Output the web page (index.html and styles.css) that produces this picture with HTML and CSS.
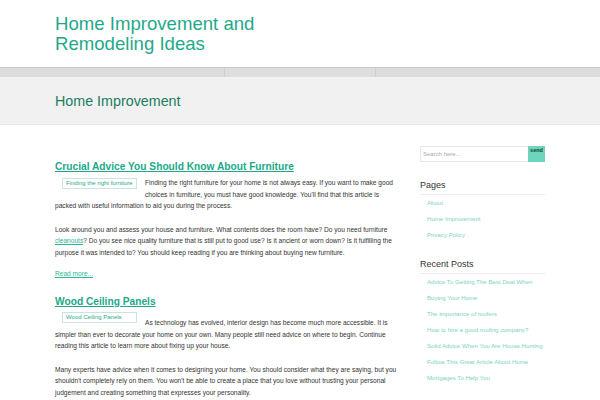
FILE: index.html
```html
<!DOCTYPE html>
<html lang="en">
<head>
  <title>Home Improvement and Remodeling Ideas</title>
  <link rel="stylesheet" href="styles.css">
</head>
<body>
  <header class="site-header">
    <div class="wrap">
      <h1 class="site-title">Home Improvement and<br>Remodeling Ideas</h1>
    </div>
  </header>

  <nav class="menu-bar">
    <div class="menu-box"></div>
  </nav>

  <div class="crumb-band">
    <div class="wrap">
      <h2 class="crumb-title">Home Improvement</h2>
    </div>
  </div>

  <div class="wrap main">
    <div class="content">
      <article class="post">
        <h3 class="post-title"><a href="#">Crucial Advice You Should Know About Furniture</a></h3>
        <p>
          <span class="thumb thumb-float"><span class="alt">Finding the right furniture</span></span>
          Finding the right furniture for your home is not always easy. If you want to make good choices in furniture, you must have good knowledge. You'll find that this article is packed with useful information to aid you during the process.
        </p>
        <p class="last">Look around you and assess your house and furniture. What contents does the room have? Do you need furniture <a href="#">cleanouts</a>? Do you see nice quality furniture that is still put to good use? Is it ancient or worn down? Is it fulfilling the purpose it was intended to? You should keep reading if you are thinking about buying new furniture.</p>
        <p class="more"><a href="#">Read more...</a></p>
      </article>

      <article class="post">
        <h3 class="post-title"><a href="#">Wood Ceiling Panels</a></h3>
        <p><span class="thumb thumb-inline"><span class="alt">Wood Ceiling Panels</span></span>As technology has evolved, interior design has become much more accessible. It is simpler than ever to decorate your home on your own. Many people still need advice on where to begin. Continue reading this article to learn more about fixing up your house.</p>
        <p>Many experts have advice when it comes to designing your home. You should consider what they are saying, but you shouldn't completely rely on them. You won't be able to create a place that you love without trusting your personal judgement and creating something that expresses your personality.</p>
      </article>
    </div>

    <aside class="sidebar">
      <form class="search">
        <input type="text" placeholder="Search here...">
        <button type="button">send</button>
      </form>

      <div class="widget">
        <h4>Pages</h4>
        <ul>
          <li><a href="#">About</a></li>
          <li><a href="#">Home Improvement</a></li>
          <li><a href="#">Privacy Policy</a></li>
        </ul>
      </div>

      <div class="widget">
        <h4>Recent Posts</h4>
        <ul>
          <li><a href="#">Advice To Getting The Best Deal When</a></li>
          <li><a href="#">Buying Your Home</a></li>
          <li><a href="#">The importance of roofers</a></li>
          <li><a href="#">How to hire a good roofing company?</a></li>
          <li><a href="#">Solid Advice When You Are House Hunting</a></li>
          <li><a href="#">Follow This Great Article About Home</a></li>
          <li><a href="#">Mortgages To Help You</a></li>
        </ul>
      </div>
    </aside>
  </div>
</body>
</html>
```

FILE: styles.css
```css
body {
  margin: 0;
  background: #fff;
  font-family: "Liberation Sans", Arial, sans-serif;
  color: #333;
}

.wrap {
  width: 490px;
  margin: 0 auto;
}

.site-header {
  height: 67px;
  background: #fff;
}

.site-title {
  margin: 0;
  padding-top: 14px;
  font-size: 18.6px;
  line-height: 20px;
  font-weight: normal;
  color: #1fa98a;
}

.menu-bar {
  height: 9px;
  background: #dcdcdc;
  border-top: 1px solid #c6c6c6;
  display: flex;
}

.menu-box {
  margin-left: 224px;
  width: 150px;
  border-left: 1px solid #cfcfcf;
  border-right: 1px solid #cfcfcf;
  background: #dedede;
}

.crumb-band {
  height: 47px;
  background: #f1f1f1;
  border-bottom: 1px solid #e6e6e6;
  display: flex;
  align-items: center;
}

.crumb-title {
  margin: 0;
  font-size: 14.3px;
  font-weight: normal;
  color: #1b7c62;
}

.main {
  display: flex;
  justify-content: space-between;
  padding-top: 21px;
}

.content {
  width: 343px;
  padding-top: 12px;
}

.post-title {
  margin: 0 0 1px;
  font-size: 10.2px;
  line-height: 18px;
}

.post-title a {
  color: #1ca889;
}

.post {
  margin-bottom: 13px;
}

.post p {
  margin: 0 0 11.5px;
  font-size: 6.6px;
  line-height: 11.7px;
}

.post p.last {
  margin-bottom: 9.5px;
}

.post p.more {
  margin-bottom: 0;
}

.post p a {
  color: #2ab596;
}

.thumb {
  display: inline-block;
  width: 75px;
  margin: 0 8px 0 7px;
}

.thumb-float {
  float: left;
  height: 20px;
  margin-top: 1px;
}

.thumb-inline {
  height: 13px;
  overflow: hidden;
  vertical-align: baseline;
}

.thumb .alt {
  display: block;
  height: 9px;
  border: 1px solid #cfe3dd;
  padding-left: 3px;
  font-size: 6px;
  line-height: 9px;
  color: #1fa98a;
  white-space: nowrap;
}

.sidebar {
  width: 125px;
}

.search {
  display: flex;
  height: 16px;
  margin: 0 0 16.5px;
}

.search input {
  flex: 1;
  min-width: 0;
  height: 16px;
  box-sizing: border-box;
  border: 1px solid #e6e6e6;
  border-right: none;
  padding: 0 0 0 2px;
  font-family: inherit;
  font-size: 6px;
  color: #999;
}

.search input::placeholder {
  color: #aaa;
}

.search button {
  width: 17px;
  height: 16px;
  border: none;
  padding: 1px 0 0;
  background: #6dd5bb;
  font-family: inherit;
  font-size: 5.5px;
  font-weight: bold;
  color: #1c3a33;
  display: flex;
  justify-content: center;
  align-items: flex-start;
}

.widget {
  margin-bottom: 15.5px;
}

.widget h4 {
  margin: 0;
  padding-bottom: 2px;
  border-bottom: 1px solid #ececec;
  font-size: 9px;
  line-height: 13px;
  font-weight: normal;
  color: #333;
}

.widget ul {
  list-style: none;
  margin: 0;
  padding: 0 0 0 7px;
}

.widget li {
  font-size: 6.1px;
  line-height: 16px;
}

.widget a {
  color: #7ad4c0;
  text-decoration: none;
}
```
